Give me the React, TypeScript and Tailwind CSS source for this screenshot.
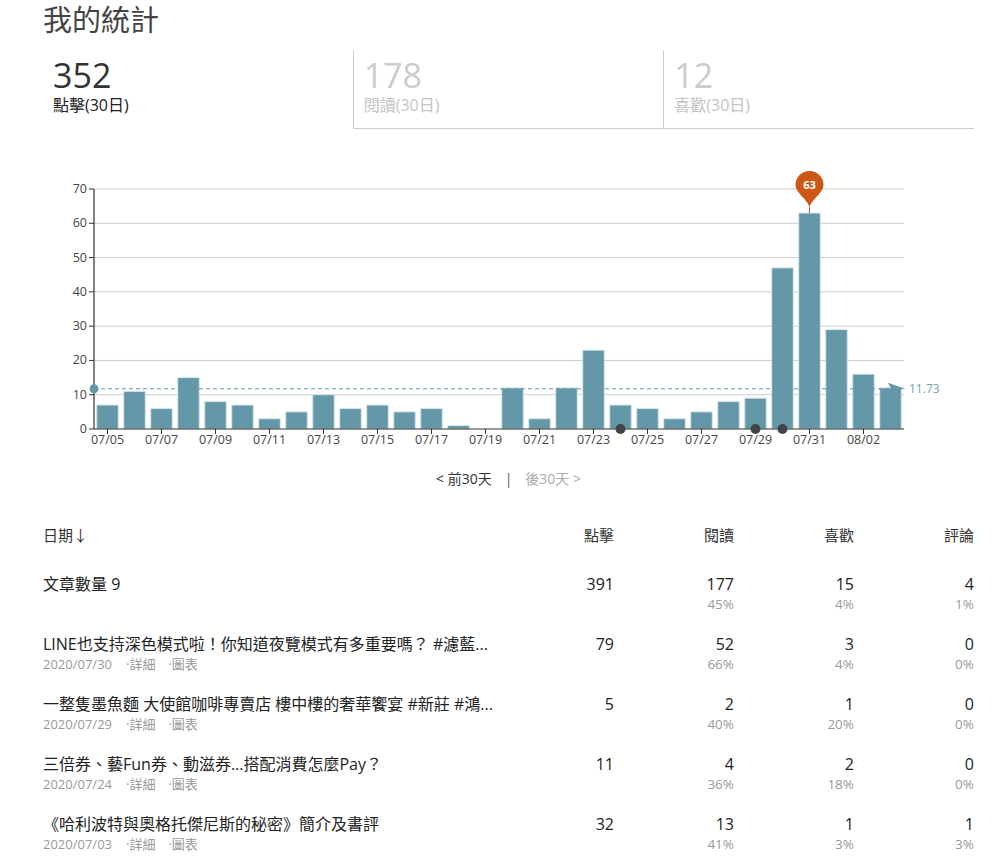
import React from 'react'

const FONT = { fontFamily: '"Open Sans", "Noto Sans CJK TC", sans-serif' }

const days = [
  '07/05', '07/06', '07/07', '07/08', '07/09', '07/10', '07/11', '07/12', '07/13', '07/14',
  '07/15', '07/16', '07/17', '07/18', '07/19', '07/20', '07/21', '07/22', '07/23', '07/24',
  '07/25', '07/26', '07/27', '07/28', '07/29', '07/30', '07/31', '08/01', '08/02', '08/03',
]
const clicks = [7, 11, 6, 15, 8, 7, 3, 5, 10, 6, 7, 5, 6, 1, 0, 12, 3, 12, 23, 7, 6, 3, 5, 8, 9, 47, 63, 29, 16, 12]
const postDays = ['07/24', '07/29', '07/30']

const articles = [
  { title: 'LINE也支持深色模式啦！你知道夜覽模式有多重要嗎？ #濾藍...', date: '2020/07/30', clicks: 79, reads: [52, '66%'], likes: [3, '4%'], comments: [0, '0%'] },
  { title: '一整隻墨魚麵 大使館咖啡專賣店 樓中樓的奢華饗宴 #新莊 #鴻...', date: '2020/07/29', clicks: 5, reads: [2, '40%'], likes: [1, '20%'], comments: [0, '0%'] },
  { title: '三倍券、藝Fun券、動滋券...搭配消費怎麼Pay？', date: '2020/07/24', clicks: 11, reads: [4, '36%'], likes: [2, '18%'], comments: [0, '0%'] },
  { title: '《哈利波特與奧格托傑尼斯的秘密》簡介及書評', date: '2020/07/03', clicks: 32, reads: [13, '41%'], likes: [1, '3%'], comments: [1, '3%'] },
]

// chart geometry in page coordinates
const X0 = 94
const STEP = 27
const Y0 = 429
const Y_TOP = 189
const PER = (Y0 - Y_TOP) / 70
const BAR = '#6498a8'

function Chart() {
  const avg = clicks.reduce((s, v) => s + v, 0) / clicks.length
  const avgY = Y0 - avg * PER
  const cx = (i: number) => X0 + i * STEP + STEP / 2
  const peak = clicks.indexOf(Math.max(...clicks))
  const peakX = cx(peak)
  const peakY = Y0 - clicks[peak] * PER

  return (
    <svg width={931} height={326} className="block" style={FONT}>
      <g transform="translate(-43,-129)">
        {/* 格線 */}
        {[1, 2, 3, 4, 5, 6, 7].map((k) => (
          <line key={k} x1={X0} x2={904} y1={Y0 - k * 10 * PER} y2={Y0 - k * 10 * PER} stroke="#cccccc" strokeWidth={1} />
        ))}
        {[0, 1, 2, 3, 4, 5, 6, 7].map((k) => (
          <g key={k}>
            <line x1={X0 - 5} x2={X0} y1={Y0 - k * 10 * PER} y2={Y0 - k * 10 * PER} stroke="#333" />
            <text x={X0 - 7} y={Y0 - k * 10 * PER + 4} textAnchor="end" fontSize={12.5} fill="#444">
              {k * 10}
            </text>
          </g>
        ))}

        {/* 長條 */}
        {clicks.map((v, i) => (
          <rect
            key={i}
            x={X0 + i * STEP + 2.7}
            y={Y0 - v * PER}
            width={21.6}
            height={v * PER}
            fill={BAR}
            stroke="#d9e8ec"
            strokeWidth={1}
          />
        ))}

        {/* 座標軸 */}
        <line x1={X0} x2={X0} y1={Y_TOP} y2={Y0} stroke="#333" strokeWidth={1.2} />
        <line x1={X0} x2={904} y1={Y0} y2={Y0} stroke="#333" strokeWidth={1.2} />
        {days.map((d, i) =>
          i % 2 === 0 ? (
            <g key={d}>
              <line x1={cx(i)} x2={cx(i)} y1={Y0} y2={Y0 + 5} stroke="#333" />
              <text x={cx(i)} y={Y0 + 15} textAnchor="middle" fontSize={12.5} fill="#444">
                {d}
              </text>
            </g>
          ) : null
        )}

        {/* 平均線 */}
        <line x1={X0} x2={896} y1={avgY} y2={avgY} stroke={BAR} strokeWidth={1} strokeDasharray="4 3" />
        <circle cx={X0} cy={avgY} r={4.5} fill={BAR} />
        <polygon points={`888,${avgY - 6} 905,${avgY} 888,${avgY + 3} 891,${avgY}`} fill={BAR} />
        <text x={909} y={avgY + 4} fontSize={12} fill="#6fa2b0">
          {avg.toFixed(2)}
        </text>

        {/* 發文日 */}
        {postDays.map((d) => (
          <circle key={d} cx={cx(days.indexOf(d))} cy={Y0} r={5} fill="#444" />
        ))}

        {/* 最高點 */}
        <line x1={peakX} x2={peakX} y1={peakY - 6} y2={peakY} stroke="#cf5716" strokeWidth={1} />
        <path
          d={`M${peakX - 14},185 a14,14 0 1,1 28,0 c0,8 -11,13 -14,22 c-3,-9 -14,-14 -14,-22 z`}
          fill="#cf5716"
        />
        <text x={peakX} y={189} textAnchor="middle" fontSize={11} fontWeight={700} fill="#fff">
          {clicks[peak]}
        </text>
      </g>
    </svg>
  )
}

function Num({ v, pct }: { v: number; pct?: string }) {
  return (
    <div className="text-right">
      <div className="text-[16px] leading-[22px] text-[#222]">{v}</div>
      {pct && <div className="text-[13.5px] leading-[18px] text-[#999]">{pct}</div>}
    </div>
  )
}

export default function App() {
  const tabs = [
    { value: 352, label: '點擊(30日)', active: true },
    { value: 178, label: '閱讀(30日)', active: false },
    { value: 12, label: '喜歡(30日)', active: false },
  ]

  return (
    <div className="bg-white min-h-[859px] pl-[43px] w-[974px]" style={FONT}>
      <h1 className="text-[29px] leading-[40px] text-[#444] font-normal">我的統計</h1>

      {/* 分頁 */}
      <div className="flex mt-[10px]">
        {tabs.map((t) => (
          <div
            key={t.label}
            className={`flex-1 pl-[10px] pt-[8px] pb-[12px] ${
              t.active ? 'border-b border-transparent' : 'border-l border-b border-[#cccccc]'
            }`}
          >
            <div className={`text-[34px] leading-[34px] ${t.active ? 'text-[#333]' : 'text-[#cccccc]'}`}>{t.value}</div>
            <div className={`mt-[2px] text-[16px] leading-[22px] ${t.active ? 'text-[#222]' : 'text-[#c4c4c4]'}`}>{t.label}</div>
          </div>
        ))}
      </div>

      <Chart />

      <div className="mt-[14px] flex justify-center text-[14px] leading-[20px]">
        <span className="text-[#333]">&lt; 前30天</span>
        <span className="mx-[13px] text-[#555]">|</span>
        <span className="text-[#aaa]">後30天 &gt;</span>
      </div>

      {/* 表格 */}
      <div className="mt-[35px]">
        <div className="grid grid-cols-[1fr_120px_120px_120px_120px] text-[15px] leading-[22px] text-[#333]">
          <div>日期↓</div>
          <div className="text-right">點擊</div>
          <div className="text-right">閱讀</div>
          <div className="text-right">喜歡</div>
          <div className="text-right">評論</div>
        </div>

        <div className="grid grid-cols-[1fr_120px_120px_120px_120px] mt-[27px]">
          <div className="text-[16px] leading-[22px] text-[#222]">文章數量 9</div>
          <Num v={391} />
          <Num v={177} pct="45%" />
          <Num v={15} pct="4%" />
          <Num v={4} pct="1%" />
        </div>

        {articles.map((a) => (
          <div key={a.date} className="grid grid-cols-[1fr_120px_120px_120px_120px] mt-[20px]">
            <div className="min-w-0">
              <div className="text-[16px] leading-[22px] text-[#222] whitespace-nowrap">{a.title}</div>
              <div className="text-[13px] leading-[18px] text-[#999]">
                <span>{a.date}</span>
                <span className="ml-[14px]">·詳細</span>
                <span className="ml-[13px]">·圖表</span>
              </div>
            </div>
            <Num v={a.clicks} />
            <Num v={a.reads[0] as number} pct={a.reads[1] as string} />
            <Num v={a.likes[0] as number} pct={a.likes[1] as string} />
            <Num v={a.comments[0] as number} pct={a.comments[1] as string} />
          </div>
        ))}
      </div>
    </div>
  )
}
